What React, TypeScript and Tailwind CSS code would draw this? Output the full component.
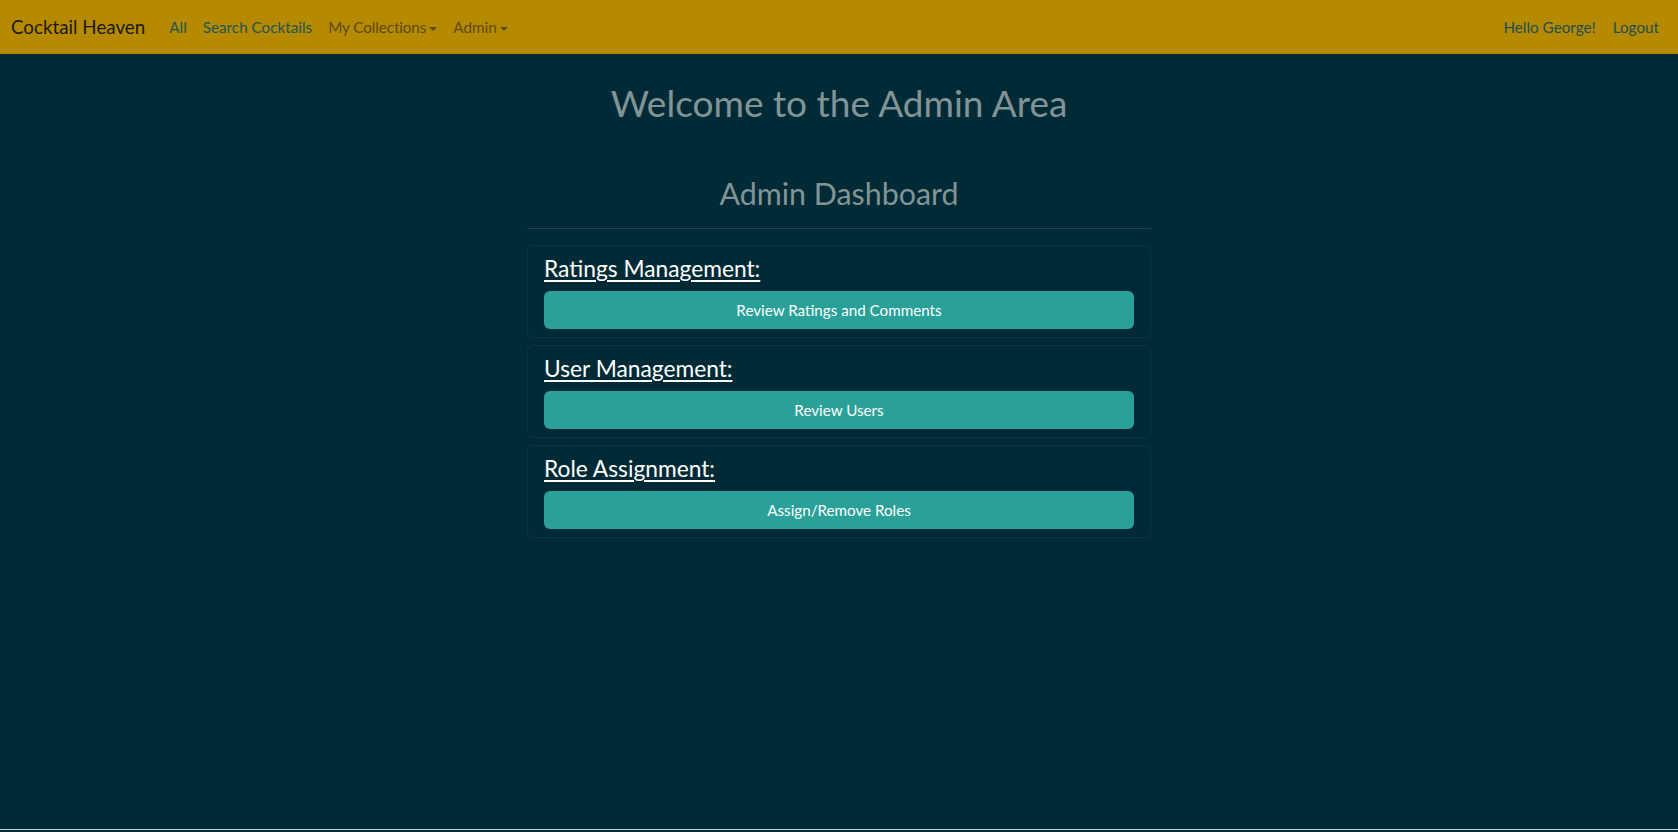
import React from "react";

const font = { fontFamily: "Lato, 'Open Sans', sans-serif" };

function Caret() {
  return <span className="ml-[3px] inline-block align-middle w-0 h-0 border-l-[4px] border-r-[4px] border-t-[4px] border-l-transparent border-r-transparent border-t-current" />;
}

function Card({ title, button }: { title: string; button: string }) {
  return (
    <div className="border border-[#0a3744] rounded-[6px] px-4 pt-2 pb-2">
      <h4 className="text-[22.75px] leading-[29px] text-white underline underline-offset-[3px] decoration-[1.5px] mb-2">{title}</h4>
      <button className="w-full h-[38px] rounded-[6px] bg-[#2aa198] text-white text-[15.2px]">{button}</button>
    </div>
  );
}

export default function App() {
  return (
    <div className="min-h-screen flex flex-col bg-[#002b36]" style={font}>
      <nav className="h-[54px] bg-[#b58900] flex items-center px-[11px]">
        <span className="text-[18.8px] text-[#1c1a0c] mr-[24px]">Cocktail Heaven</span>
        <div className="flex items-center gap-[16px] text-[15.25px]">
          <span className="text-[#1f5551]">All</span>
          <span className="text-[#1f5551]">Search Cocktails</span>
          <span className="text-[#5e4a0e] tracking-[-0.1px]">My Collections<Caret /></span>
          <span className="text-[#5e4a0e]">Admin<Caret /></span>
        </div>
        <div className="ml-auto flex items-center gap-[17px] text-[15.25px] text-[#1d4f4d] mr-[8px]">
          <span>Hello George!</span>
          <span>Logout</span>
        </div>
      </nav>
      <main className="flex-1 flex flex-col items-center">
        <h1 className="mt-[25px] text-[37px] leading-[48px] text-[#839496]">Welcome to the Admin Area</h1>
        <div className="w-[624px] mt-[47px]">
          <h2 className="text-center text-[30.4px] leading-[38px] text-[#839496]">Admin Dashboard</h2>
          <hr className="my-4 border-t border-[#21454e]" />
          <div className="flex flex-col gap-[7px]">
            <Card title="Ratings Management:" button="Review Ratings and Comments" />
            <Card title="User Management:" button="Review Users" />
            <Card title="Role Assignment:" button="Assign/Remove Roles" />
          </div>
        </div>
      </main>
      <footer className="border-t border-[#c9d3d6] h-[3px]" />
    </div>
  );
}
